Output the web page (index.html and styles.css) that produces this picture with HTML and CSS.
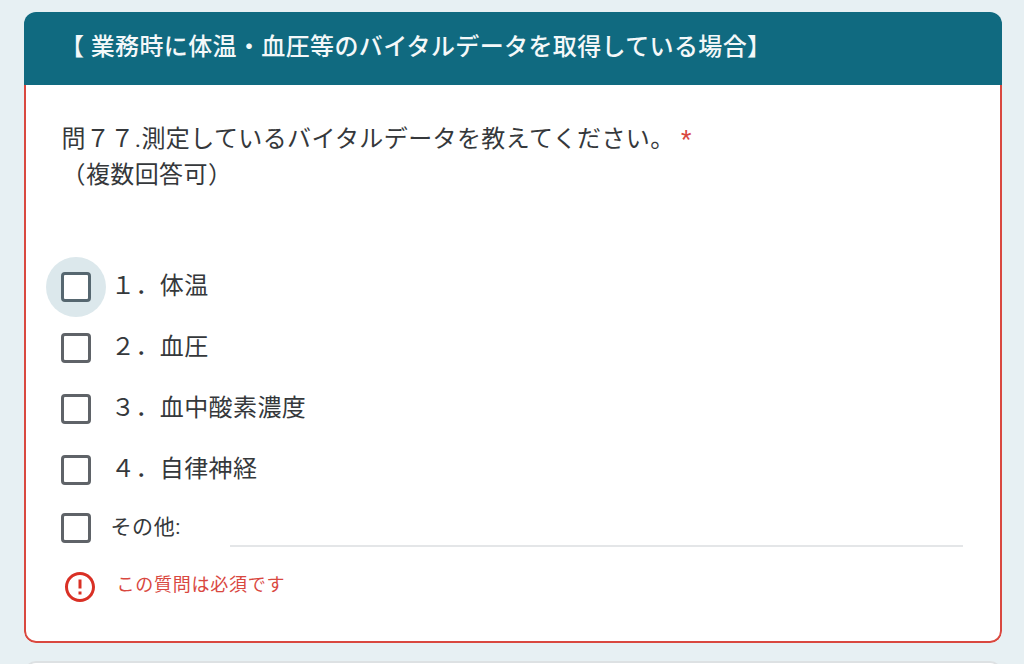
FILE: index.html
```html
<!DOCTYPE html>
<html lang="ja">
<head>
    <meta charset="UTF-8">
    <meta name="viewport" content="width=device-width, initial-scale=1.0">
    <title>フォーム</title>
    <link rel="stylesheet" href="styles.css">
</head>
<body>
    <section class="card-error">
        <header class="card-header">【 業務時に体温・血圧等のバイタルデータを取得している場合】</header>
        <div class="card-body">
            <p class="question">問７７.測定しているバイタルデータを教えてください。 <span class="required">*</span><br>（複数回答可）</p>

            <div class="options">
                <label class="option">
                    <span class="check check-hover"></span>
                    <span class="option-text">１．体温</span>
                </label>
                <label class="option">
                    <span class="check"></span>
                    <span class="option-text">２．血圧</span>
                </label>
                <label class="option">
                    <span class="check"></span>
                    <span class="option-text">３．血中酸素濃度</span>
                </label>
                <label class="option">
                    <span class="check"></span>
                    <span class="option-text">４．自律神経</span>
                </label>
                <label class="option option-other">
                    <span class="check"></span>
                    <span class="other-label">その他:</span>
                    <span class="other-line"></span>
                </label>
            </div>

            <div class="error">
                <svg class="error-icon" viewBox="0 0 24 24" width="36" height="36">
                    <path fill="#d93025" d="M11 15h2v2h-2zm0-8h2v6h-2zm.99-5C6.47 2 2 6.48 2 12s4.47 10 9.99 10C17.52 22 22 17.52 22 12S17.52 2 11.99 2zM12 20c-4.42 0-8-3.58-8-8s3.58-8 8-8 8 3.58 8 8-3.58 8-8 8z"/>
                </svg>
                <span class="error-text">この質問は必須です</span>
            </div>
        </div>
    </section>

    <div class="next-clip">
        <section class="card-next"></section>
    </div>
</body>
</html>
```

FILE: styles.css
```css
* {
    margin: 0;
    padding: 0;
    box-sizing: border-box;
}
html, body {
    height: 664px;
    overflow: hidden;
}
body {
    background: #e7f0f3;
    padding: 12px 22px 0 24px;
    font-family: "Roboto", "Noto Sans CJK JP", sans-serif;
    color: #35383b;
}
.card-error {
    height: 631px;
    display: flex;
    flex-direction: column;
    border-radius: 12px;
    background: #fff;
    overflow: hidden;
}
.card-header {
    flex: none;
    height: 73px;
    padding-left: 36px;
    background: #106a80;
    color: #f4f8f9;
    font-size: 24px;
    font-weight: 500;
    line-height: 70px;
    letter-spacing: 0.37px;
}
.card-body {
    flex: 1;
    padding: 36px 36px 0 35.5px;
    border: 2px solid #d9483f;
    border-top: 0;
    border-radius: 0 0 12px 12px;
}
.question {
    font-size: 24px;
    line-height: 36px;
    letter-spacing: 0.4px;
}
.required {
    color: #d9483f;
}
.options {
    margin-top: 63px;
    margin-left: -0.5px;
}
.option {
    display: flex;
    align-items: center;
    height: 61px;
    isolation: isolate;
}
.check {
    position: relative;
    flex: none;
    width: 30px;
    height: 30px;
    border: 3px solid #5f6368;
    border-radius: 4px;
    background: #fff;
}
.check-hover {
    border-color: #566770;
}
.check-hover::before {
    content: "";
    position: absolute;
    top: -18px;
    left: -18px;
    width: 60px;
    height: 60px;
    border-radius: 50%;
    background: #dce8ec;
    z-index: -1;
}
.option-text {
    margin-left: 20px;
    padding-bottom: 6px;
    font-size: 24px;
    letter-spacing: 0.4px;
}
.option-other {
    height: 55px;
}
.other-label {
    flex: none;
    width: 119.5px;
    margin-left: 19.5px;
    padding-bottom: 6px;
    font-size: 21px;
    letter-spacing: 0.6px;
}
.other-line {
    flex: none;
    width: 733px;
    height: 2px;
    margin-top: 37px;
    background: #e4e6e8;
}
.error {
    display: flex;
    align-items: center;
    margin-top: 14px;
}
.error-icon {
    flex: none;
}
.error-text {
    margin-left: 19px;
    padding-bottom: 8px;
    font-size: 18px;
    letter-spacing: 0.75px;
    color: #d9483f;
}
.next-clip {
    height: 3px;
    margin-top: 18px;
    overflow: hidden;
}
.card-next {
    height: 30px;
    border: 2px solid #dde1e3;
    border-radius: 12px;
    background: #fff;
}
```
